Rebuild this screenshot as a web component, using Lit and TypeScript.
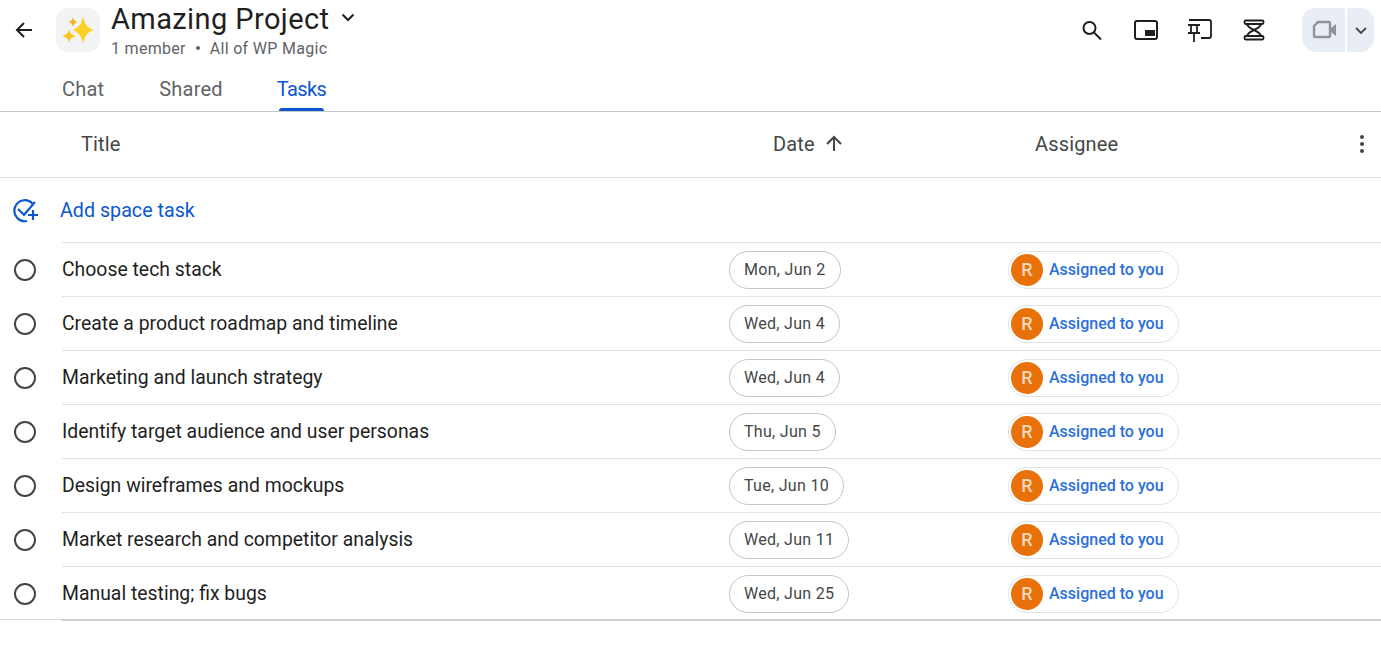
import { LitElement, css, html, svg } from 'lit';
import { customElement } from 'lit/decorators.js';

const TASKS = [
  ['Choose tech stack', 'Mon, Jun 2'],
  ['Create a product roadmap and timeline', 'Wed, Jun 4'],
  ['Marketing and launch strategy', 'Wed, Jun 4'],
  ['Identify target audience and user personas', 'Thu, Jun 5'],
  ['Design wireframes and mockups', 'Tue, Jun 10'],
  ['Market research and competitor analysis', 'Wed, Jun 11'],
  ['Manual testing; fix bugs', 'Wed, Jun 25'],
];

const icon = (size: number, body: unknown, box = 24) => html`
  <svg width=${size} height=${size} viewBox="0 0 ${box} ${box}" fill="none">${body}</svg>
`;

@customElement('app-root')
export class AppRoot extends LitElement {
  static styles = css`
    :host {
      display: block;
      width: 1381px;
      height: 645px;
      background: #fff;
      color: #1f1f1f;
      font-family: Roboto, "Liberation Sans", sans-serif;
      overflow: hidden;
    }
    svg { display: block; flex: none; }

    .top {
      display: flex;
      align-items: flex-start;
      height: 70px;
    }
    .back { margin: 18px 0 0 12px; }
    .avatar {
      width: 44px;
      height: 44px;
      margin: 8px 0 0 20px;
      border-radius: 12px;
      background: #f1f3f4;
    }
    .heading { margin-left: 11px; }
    .name {
      display: flex;
      align-items: center;
      height: 38px;
      font-size: 29px;
      letter-spacing: 0.4px;
    }
    .name svg { margin: -4px 0 0 11px; }
    .meta {
      display: flex;
      align-items: center;
      height: 20px;
      font-size: 16px;
      color: #5f6368;
      letter-spacing: 0.3px;
    }
    .dot {
      width: 4px;
      height: 4px;
      margin: 0 10px;
      border-radius: 50%;
      background: #5f6368;
    }
    .actions {
      display: flex;
      align-items: center;
      gap: 30px;
      height: 60px;
      margin-left: auto;
    }
    .call {
      display: flex;
      gap: 2px;
      margin: 0 7px 0 6px;
    }
    .call div {
      display: flex;
      align-items: center;
      justify-content: center;
      height: 44px;
      background: #e8edf6;
    }
    .call .cam { width: 43px; border-radius: 14px 2px 2px 14px; }
    .call .more { width: 27px; border-radius: 2px 14px 14px 2px; }

    .tabs {
      display: flex;
      gap: 55px;
      height: 41px;
      padding-left: 62px;
      border-bottom: 1px solid #c7c7c7;
      font-size: 20px;
      letter-spacing: 0.2px;
      color: #5f6368;
    }
    .tab {
      position: relative;
      padding-top: 7px;
    }
    .tab.on {
      margin-left: -1px;
      color: #0b57d0;
      letter-spacing: -0.6px;
    }
    .tab.on::after {
      content: "";
      position: absolute;
      left: 2px;
      right: 2px;
      bottom: 0;
      height: 3px;
      border-radius: 3px 3px 0 0;
      background: #0b57d0;
    }

    .cols {
      display: grid;
      grid-template-columns: 773px 262px 1fr 31px;
      align-items: center;
      height: 66px;
      padding-bottom: 1px;
      box-sizing: border-box;
      border-bottom: 1px solid #e3e3e3;
      font-size: 20px;
      letter-spacing: 0.15px;
      color: #444746;
    }
    .cols .title { padding-left: 81px; }
    .cols .date { display: flex; align-items: center; gap: 9px; }

    .add {
      display: flex;
      align-items: center;
      height: 64px;
      padding-left: 12px;
      font-size: 19.7px;
      color: #0b57d0;
    }
    .add span { margin-left: 21px; }

    .row {
      display: flex;
      align-items: center;
      height: 54px;
    }
    .check { width: 62px; padding: 1px 0 0 13px; box-sizing: border-box; }
    .cells {
      display: grid;
      grid-template-columns: 667px 279px 1fr;
      align-items: center;
      flex: 1;
      height: 53px;
      border-top: 1px solid #e3e3e3;
      font-size: 19.4px;
    }
    .text { margin-top: -1px; }
    .pill {
      display: inline-flex;
      align-items: center;
      justify-self: start;
      height: 36px;
      padding: 0 14px;
      border: 1px solid #c4c7c5;
      border-radius: 19px;
      font-size: 16px;
      letter-spacing: 0.3px;
      color: #444746;
    }
    .who {
      display: inline-flex;
      align-items: center;
      justify-self: start;
      width: 171px;
      height: 38px;
      box-sizing: border-box;
      padding-left: 2px;
      border: 1px solid #e3e3e3;
      border-radius: 19px;
      font-size: 16px;
      font-weight: 500;
      color: #2a6fdb;
    }
    .face {
      display: flex;
      align-items: center;
      justify-content: center;
      width: 32px;
      height: 32px;
      margin-right: 6px;
      border-radius: 50%;
      background: #e8710a;
      color: #fbd9bd;
      font-size: 18px;
    }
    .end {
      height: 2px;
      margin-top: -1px;
      background:
        linear-gradient(#cfd0d0, #cfd0d0) 62px 0 / 100% 2px no-repeat,
        linear-gradient(#d9d9d9, #d9d9d9) 0 0 / 62px 1px no-repeat;
    }
  `;

  render() {
    return html`
      <div class="top">
        <div class="back">${icon(24, svg`<path d="M20 12H5M12 5l-7 7 7 7" stroke="#1f1f1f" stroke-width="2"/>`)}</div>
        <div class="avatar">
          ${icon(44, svg`
            <path d="M27 8c1.500 8 4 12 11 14-7 2-9.500 6-11 14-1.500-8-4-12-11-14 7-2 9.500-6 11-14z" fill="#fdd023"/>
            <path d="M13 21c.8 4.500 2.500 6 7 7-4.500 1-6.200 2.500-7 7-.8-4.500-2.500-6-7-7 4.500-1 6.200-2.500 7-7z" fill="#fcc419"/>
            <path d="M17 9c.5 3 1.800 4.400 5 5-3.200.6-4.500 2-5 5-.5-3-1.800-4.400-5-5 3.200-.6 4.500-2 5-5z" fill="#f9b115"/>
          `, 44)}
        </div>
        <div class="heading">
          <div class="name">Amazing Project
            ${icon(16, svg`<path d="M2.500 5.500L8 11l5.500-5.500" stroke="#1f1f1f" stroke-width="2"/>`, 16)}
          </div>
          <div class="meta">1 member<span class="dot"></span>All of WP Magic</div>
        </div>
        <div class="actions">
          ${icon(24, svg`<circle cx="9.500" cy="10" r="6" stroke="#1f1f1f" stroke-width="2"/><path d="M14 14.500l7 7" stroke="#1f1f1f" stroke-width="2"/>`)}
          ${icon(24, svg`<rect x="1" y="3" width="22" height="18" rx="2" stroke="#1f1f1f" stroke-width="2"/><rect x="11" y="12" width="10" height="6" fill="#1f1f1f"/>`)}
          ${icon(24, svg`<path d="M1 2h20a2 2 0 012 2v14a2 2 0 01-2 2h-8M0 7h12M3 7v8M9 7v8M0 15h12M6 15v9" stroke="#1f1f1f" stroke-width="1.800"/>`)}
          ${icon(24, svg`
            <rect x="2.500" y="2.500" width="19" height="3.500" rx="1.200" stroke="#1f1f1f" stroke-width="1.800"/>
            <rect x="2.500" y="18" width="19" height="3.500" rx="1.200" stroke="#1f1f1f" stroke-width="1.800"/>
            <path d="M5 6c1 3.500 4 4.500 7 6 3 1.500 6 2.500 7 6M19 6c-1 3.500-4 4.500-7 6-3 1.500-6 2.500-7 6" stroke="#1f1f1f" stroke-width="2"/>
          `)}
          <div class="call">
            <div class="cam">${icon(24, svg`<path d="M6 4h11a1 1 0 011 1v13a1 1 0 01-1 1H3a1 1 0 01-1-1V8z" stroke="#8f9399" stroke-width="2.400"/><path d="M19 10l5-4v12l-5-4z" fill="#8f9399"/>`)}</div>
            <div class="more">${icon(16, svg`<path d="M3 6l5 5 5-5" stroke="#444746" stroke-width="1.800"/>`, 16)}</div>
          </div>
        </div>
      </div>

      <div class="tabs">
        <div class="tab">Chat</div>
        <div class="tab">Shared</div>
        <div class="tab on">Tasks</div>
      </div>

      <div class="cols">
        <div class="title">Title</div>
        <div class="date">Date
          ${icon(20, svg`<path d="M10 17V3.500M3 10l7-7 7 7" stroke="#444746" stroke-width="2"/>`, 20)}
        </div>
        <div>Assignee</div>
        ${icon(24, svg`<circle cx="12" cy="5" r="2" fill="#444746"/><circle cx="12" cy="12" r="2" fill="#444746"/><circle cx="12" cy="19" r="2" fill="#444746"/>`)}
      </div>

      <div class="add">
        ${icon(27, svg`
          <path d="M20.500 6.500A10.500 10.500 0 1 0 15 24" stroke="#0b57d0" stroke-width="2.200"/>
          <path d="M6 12l6 6L23 5" stroke="#0b57d0" stroke-width="2.200"/>
          <path d="M21 13v10M16 18h10" stroke="#0b57d0" stroke-width="2.200"/>
        `, 27)}
        <span>Add space task</span>
      </div>

      ${TASKS.map(([title, date]) => html`
        <div class="row">
          <div class="check">
            ${icon(24, svg`<circle cx="12" cy="12" r="10" stroke="#444746" stroke-width="2"/>`)}
          </div>
          <div class="cells">
            <div class="text">${title}</div>
            <div class="pill">${date}</div>
            <div class="who"><span class="face">R</span>Assigned to you</div>
          </div>
        </div>
      `)}
      <div class="end"></div>
    `;
  }
}
